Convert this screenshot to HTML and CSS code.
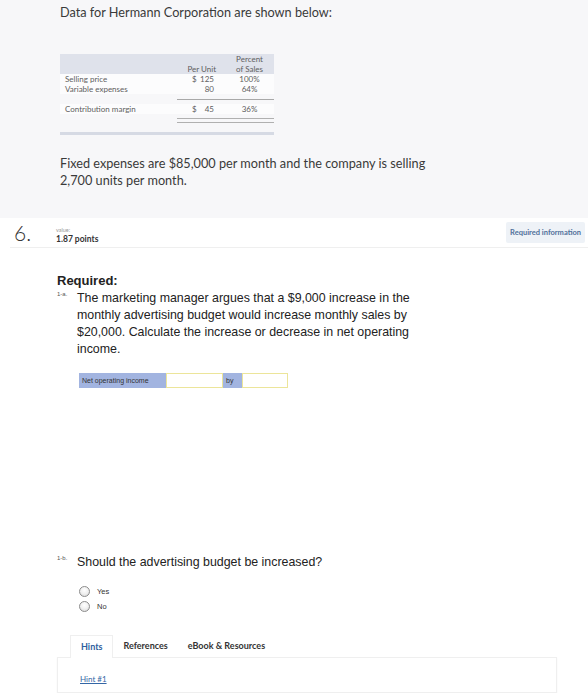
FILE: index.html
```html
<!DOCTYPE html>
<html>
<head>
<meta charset="utf-8">
<link rel="stylesheet" href="styles.css">
</head>
<body>
<div class="stem">
  <p class="intro">Data for Hermann Corporation are shown below:</p>
  <div class="data">
    <div class="hd"></div>
    <div class="hd pu-h">Per Unit</div>
    <div class="hd pc-h">Percent<br>of Sales</div>

    <div class="lb row">Selling price</div>
    <div class="pu row"><span>$</span><span>125</span></div>
    <div class="pc row">100%</div>

    <div class="lb row">Variable expenses</div>
    <div class="pu row"><span></span><span>80</span></div>
    <div class="pc row">64%</div>

    <div class="sep"></div>

    <div class="lb row">Contribution margin</div>
    <div class="pu row"><span>$</span><span>45</span></div>
    <div class="pc row">36%</div>

    <div class="dbl"></div>
  </div>
  <div class="bar"></div>
  <p class="fixed">Fixed expenses are $85,000 per month and the company is selling<br>2,700 units per month.</p>
</div>

<div class="qhead">
  <div class="num">6.</div>
  <div class="value">
    <span class="vlbl">value:</span>
    <span class="pts">1.87 points</span>
  </div>
  <div class="reqinfo">Required information</div>
</div>

<div class="question">
  <h3 class="req">Required:</h3>
  <div class="part">
    <span class="tag">1-a.</span>
    <p class="ptext">The marketing manager argues that a $9,000 increase in the monthly advertising budget would increase monthly sales by $20,000. Calculate the increase or decrease in net operating income.</p>
  </div>

  <div class="answer">
    <span class="cell lbl-cell">Net operating income</span>
    <span class="inp inp1"></span>
    <span class="cell by-cell">by</span>
    <span class="inp inp2"></span>
  </div>

  <div class="part partb">
    <span class="tag">1-b.</span>
    <p class="ptext">Should the advertising budget be increased?</p>
  </div>

  <div class="radios">
    <label class="radio"><span class="circle"></span>Yes</label>
    <label class="radio"><span class="circle"></span>No</label>
  </div>

  <div class="tabs">
    <span class="tab active">Hints</span>
    <span class="tab">References</span>
    <span class="tab">eBook &amp; Resources</span>
  </div>
  <div class="panel">
    <a class="hint" href="#">Hint #1</a>
  </div>
</div>
</body>
</html>
```

FILE: styles.css
```css
* { box-sizing: border-box; }

body {
  margin: 0;
  background: #ffffff;
  font-family: "Liberation Sans", Arial, sans-serif;
  color: #333333;
}

/* ---------- stem ---------- */
.stem {
  background: #f7f7f9;
  height: 218px;
  padding: 4px 0 0 60px;
  font-family: Lato, "Open Sans", sans-serif;
}

.intro {
  margin: 0;
  font-size: 12.7px;
  line-height: 16px;
  color: #3a3a3a;
}

.data {
  margin-top: 34px;
  width: 214px;
  display: grid;
  grid-template-columns: 117px 48px 49px;
  font-size: 8px;
  color: #5e5e5e;
}

.hd {
  background: #dfe2eb;
  height: 20px;
  line-height: 10px;
  display: flex;
  align-items: flex-end;
}

.pu-h {
  justify-content: flex-end;
  padding-right: 9px;
}

.pc-h {
  justify-content: center;
  text-align: center;
}

.row {
  height: 10px;
  line-height: 10px;
  background: #fcfcfd;
}

.lb { padding-left: 5px; }

.pu {
  display: flex;
  justify-content: space-between;
  padding: 0 11px 0 15px;
}

.pc { text-align: center; }

.sep {
  grid-column: 2 / 4;
  height: 6px;
  border-bottom: 1px solid #a8a8a8;
  margin-bottom: 4px;
}

.dbl {
  grid-column: 2 / 4;
  height: 5px;
  margin-top: 4px;
  border-top: 1px solid #b0b0b0;
  border-bottom: 1px solid #b0b0b0;
}

.bar {
  width: 214px;
  height: 3px;
  margin-top: 9px;
  background: #d6dae4;
}

.fixed {
  margin: 20px 0 0;
  font-size: 12.7px;
  line-height: 17px;
  color: #3a3a3a;
}

/* ---------- question header ---------- */
.qhead {
  display: flex;
  align-items: flex-start;
  height: 30px;
  margin-left: 10px;
  border-bottom: 1px solid #efefef;
  font-family: Lato, "Open Sans", sans-serif;
}

.num {
  font-size: 21px;
  font-weight: 300;
  line-height: 22px;
  padding: 4px 0 0 4px;
  width: 46px;
  color: #333;
}

.value {
  display: flex;
  flex-direction: column;
  padding-top: 8px;
}

.vlbl {
  font-size: 5.5px;
  line-height: 8px;
  color: #9a9a9a;
}

.pts {
  font-size: 8.5px;
  font-weight: 700;
  line-height: 10px;
  color: #333;
}

.reqinfo {
  margin: 4px 3px 0 auto;
  height: 21px;
  padding: 0 4px;
  display: flex;
  align-items: center;
  background: #eef2f7;
  border-radius: 2px;
  font-size: 7.5px;
  font-weight: 700;
  color: #50709a;
}

/* ---------- question body ---------- */
.question {
  padding-left: 57px;
}

.req {
  margin: 25px 0 0;
  font-size: 13px;
  line-height: 16px;
  font-weight: 700;
  color: #222;
}

.part {
  display: flex;
  align-items: flex-start;
  margin-top: 1px;
}

.tag {
  width: 20px;
  flex: none;
  font-size: 6px;
  line-height: 9px;
  color: #555;
}

.ptext {
  margin: 0;
  width: 345px;
  font-size: 12.4px;
  line-height: 17px;
  color: #222;
}

.answer {
  display: flex;
  margin: 15px 0 0 22px;
  height: 15px;
}

.cell {
  background: #a2b4e0;
  font-size: 7px;
  line-height: 15px;
  color: #333;
  padding-left: 3px;
}

.lbl-cell { width: 87px; }
.by-cell { width: 19px; }

.inp {
  background: #ffffff;
  border: 1px solid #ece59a;
}

.inp1 { width: 57px; }
.inp2 { width: 46px; }

.partb {
  margin-top: 166px;
}

.radios {
  display: flex;
  flex-direction: column;
  margin: 13px 0 0 22px;
}

.radio {
  display: flex;
  align-items: center;
  height: 15px;
  font-size: 7.5px;
  color: #333;
}

.circle {
  width: 11px;
  height: 11px;
  border-radius: 50%;
  border: 1px solid #8c8c8c;
  background: radial-gradient(circle at 50% 35%, #ffffff 0%, #f0f0f0 50%, #d4d4d4 100%);
  margin-right: 7px;
}

.tabs {
  display: flex;
  align-items: flex-end;
  margin: 21px 0 0 13px;
  height: 22px;
  font-family: Lato, "Open Sans", sans-serif;
}

.tab {
  height: 22px;
  line-height: 22px;
  padding: 0 10px;
  font-size: 9px;
  font-weight: 700;
  color: #333;
}

.tab.active {
  color: #2f5f9e;
  background: #fff;
  border: 1px solid #efefef;
  border-bottom: none;
  position: relative;
  z-index: 1;
  margin-bottom: -1px;
  height: 23px;
}

.panel {
  width: 500px;
  height: 36px;
  border: 1px solid #efefef;
  box-shadow: 0 1px 2px rgba(0,0,0,0.04);
  padding: 8px 0 0 22px;
  font-family: Lato, "Open Sans", sans-serif;
}

.hint {
  font-size: 8px;
  color: #3466a5;
  text-decoration: underline;
}
```
